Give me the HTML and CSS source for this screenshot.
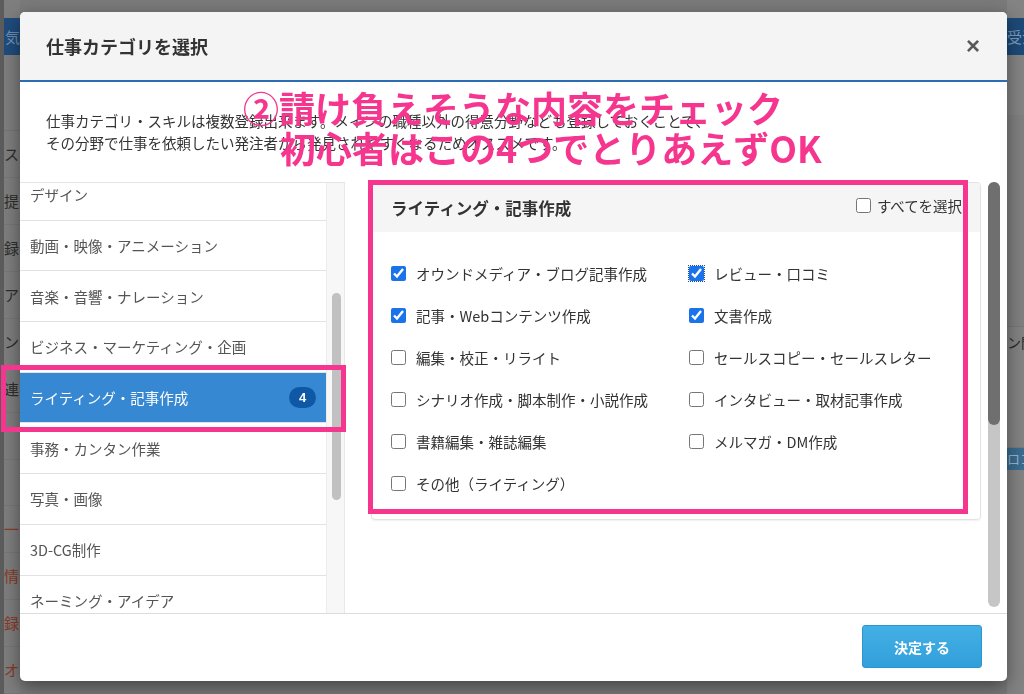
FILE: index.html
```html
<!DOCTYPE html>
<html lang="ja">
<head>
<meta charset="utf-8">
<title>仕事カテゴリを選択</title>
<link rel="stylesheet" href="styles.css">
</head>
<body>
<div class="page">
  <div class="page-left">
    <div class="pl-head">気</div>
    <div class="pl-gap"></div>
    <div class="pl-cell">ス</div>
    <div class="pl-cell">提</div>
    <div class="pl-cell">録</div>
    <div class="pl-cell">ア</div>
    <div class="pl-cell">ン</div>
    <div class="pl-cell">連</div>
    <div class="pl-cell"></div>
    <div class="pl-cell"></div>
    <div class="pl-cell red">一</div>
    <div class="pl-cell red">情</div>
    <div class="pl-cell red">録</div>
    <div class="pl-cell red">オ</div>
  </div>
  <div class="page-center"></div>
  <div class="page-right">
    <div class="pr-head">受注</div>
    <div class="pr-block"></div>
    <div class="pr-text">ン閲</div>
    <div class="pr-spacer"></div>
    <div class="pr-bar">ロコ</div>
  </div>
</div>

<div class="modal">
  <div class="modal-header">
    <h2 class="modal-title">仕事カテゴリを選択</h2>
    <span class="modal-close">×</span>
  </div>
  <div class="modal-desc">
    <p>仕事カテゴリ・スキルは複数登録出来ます。メインの職種以外の得意分野なども登録しておくことで、<br>その分野で仕事を依頼したい発注者から発見されやすくなるためオススメです。</p>
  </div>
  <div class="modal-body">
    <div class="cat-pane">
      <div class="cat-viewport">
        <ul class="cat-list">
          <li class="cat-item">デザイン</li>
          <li class="cat-item">動画・映像・アニメーション</li>
          <li class="cat-item">音楽・音響・ナレーション</li>
          <li class="cat-item">ビジネス・マーケティング・企画</li>
          <li class="cat-item active">ライティング・記事作成<span class="badge">4</span></li>
          <li class="cat-item">事務・カンタン作業</li>
          <li class="cat-item">写真・画像</li>
          <li class="cat-item">3D-CG制作</li>
          <li class="cat-item">ネーミング・アイデア</li>
        </ul>
      </div>
      <div class="scroll-light"><div class="thumb-light"></div></div>
    </div>
    <div class="skill-pane">
      <div class="skill-content">
        <div class="card">
          <div class="card-header">
            <h3 class="card-title">ライティング・記事作成</h3>
            <label class="select-all"><input type="checkbox" class="cb">すべてを選択</label>
          </div>
          <div class="card-body">
            <label class="opt"><input type="checkbox" class="cb" checked>オウンドメディア・ブログ記事作成</label>
            <label class="opt"><input type="checkbox" class="cb focus" checked>レビュー・口コミ</label>
            <label class="opt"><input type="checkbox" class="cb" checked>記事・Webコンテンツ作成</label>
            <label class="opt"><input type="checkbox" class="cb" checked>文書作成</label>
            <label class="opt"><input type="checkbox" class="cb">編集・校正・リライト</label>
            <label class="opt"><input type="checkbox" class="cb">セールスコピー・セールスレター</label>
            <label class="opt"><input type="checkbox" class="cb">シナリオ作成・脚本制作・小説作成</label>
            <label class="opt"><input type="checkbox" class="cb">インタビュー・取材記事作成</label>
            <label class="opt"><input type="checkbox" class="cb">書籍編集・雑誌編集</label>
            <label class="opt"><input type="checkbox" class="cb">メルマガ・DM作成</label>
            <label class="opt"><input type="checkbox" class="cb">その他（ライティング）</label>
          </div>
        </div>
      </div>
      <div class="scroll-dark"><div class="thumb-dark"></div></div>
    </div>
  </div>
  <div class="modal-footer">
    <button class="btn-primary">決定する</button>
  </div>
</div>

<div class="anno-text">
  <span class="anno-line">②請け負えそうな内容をチェック</span>
  <span class="anno-line second">初心者はこの4つでとりあえずOK</span>
</div>
<div class="anno-box anno-card"></div>
<div class="anno-box anno-item"></div>
</body>
</html>
```

FILE: styles.css
```css
* { box-sizing: border-box; }
html, body { margin: 0; padding: 0; }
body {
  width: 1024px;
  height: 694px;
  overflow: hidden;
  background: #7a7a7a;
  font-family: "Noto Sans CJK JP", "Noto Sans", sans-serif;
  color: #333;
}

/* background page (dimmed) */
.page {
  display: flex;
  height: 694px;
}
.page-left {
  width: 20px;
  background: #7e7e7e;
  border-left: 4px solid #5c5c5c;
  display: flex;
  flex-direction: column;
}
.pl-head {
  margin-top: 18px;
  height: 37px;
  background: #1f4c7c;
  color: #6f8fb3;
  font-size: 15px;
  line-height: 37px;
  padding-left: 1px;
}
.pl-gap { height: 77px; border-bottom: 1px solid #747474; }
.pl-cell {
  height: 47px;
  line-height: 46px;
  font-size: 15px;
  color: #2e2e2e;
  padding-left: 0;
  border-bottom: 1px solid #767676;
}
.pl-cell.red { color: #8a3a28; }
.page-center { flex: 1; }
.page-right {
  width: 17px;
  background: #838383;
  display: flex;
  flex-direction: column;
}
.pr-head {
  margin-top: 18px;
  height: 37px;
  background: #1d4a78;
  color: #7f9cc0;
  font-size: 15px;
  line-height: 37px;
  white-space: nowrap;
  overflow: hidden;
}
.pr-block { height: 272px; border-top: 60px solid #848484; border-bottom: 1px solid #777; background: #808080; }
.pr-text {
  height: 30px;
  line-height: 30px;
  font-size: 14px;
  color: #2c2c2c;
  white-space: nowrap;
  overflow: hidden;
}
.pr-spacer { height: 91px; border-bottom: 1px solid #7a7a7a; }
.pr-bar {
  height: 22px;
  background: #3b6c90;
  color: #9ab8cf;
  font-size: 13px;
  line-height: 22px;
  white-space: nowrap;
  overflow: hidden;
}

/* modal */
.modal {
  position: fixed;
  left: 20px;
  top: 12px;
  width: 987px;
  height: 669px;
  background: #fff;
  border-radius: 5px;
  overflow: hidden;
  box-shadow: 0 6px 18px rgba(0,0,0,0.45);
  display: flex;
  flex-direction: column;
}
.modal-header {
  height: 70px;
  flex: none;
  background: #f4f4f4;
  border-bottom: 2px solid #2c6eb4;
  display: flex;
  align-items: center;
  justify-content: space-between;
  padding: 0 27px 0 26px;
}
.modal-title {
  margin: 0;
  font-size: 18px;
  font-weight: bold;
  color: #333;
  line-height: 24px;
}
.modal-close {
  font-size: 24px;
  font-weight: bold;
  color: #5a5a5a;
  line-height: 24px;
  font-family: "Liberation Sans", sans-serif;
}
.modal-desc {
  height: 100px;
  flex: none;
  padding: 28px 26px 0;
}
.modal-desc p {
  margin: 0;
  font-size: 14.5px;
  line-height: 22px;
  color: #333;
  white-space: nowrap;
}
.modal-body {
  height: 431px;
  flex: none;
  display: flex;
}

/* category list */
.cat-pane {
  width: 325px;
  flex: none;
  display: flex;
  border-top: 1px solid #e4e4e4;
  border-right: 1px solid #e8e8e8;
}
.cat-viewport {
  width: 307px;
  overflow: hidden;
  border-right: 1px solid #ececec;
}
.cat-list {
  list-style: none;
  margin: -13px 0 0;
  padding: 0;
}
.cat-item {
  height: 50.7px;
  border-bottom: 1px solid #e2e2e2;
  padding: 0 10px;
  display: flex;
  align-items: center;
  justify-content: space-between;
  font-size: 14.5px;
  color: #555;
}
.cat-item.active {
  background: #3788d3;
  color: #fff;
}
.badge {
  background: #0f58a6;
  color: #fff;
  font-size: 13px;
  font-weight: bold;
  line-height: 21px;
  min-width: 27px;
  text-align: center;
  border-radius: 11px;
  font-family: "Liberation Sans", sans-serif;
}
.scroll-light {
  flex: 1;
  background: #f7f7f7;
  padding: 110px 0 0 5px;
}
.thumb-light {
  width: 9px;
  height: 207px;
  background: #c1c1c1;
  border-radius: 5px;
}

/* skills pane */
.skill-pane {
  flex: 1;
  display: flex;
}
.skill-content {
  flex: 1;
  padding-left: 26px;
}
.card {
  width: 610px;
  height: 338px;
  border: 1px solid #e3e3e3;
  border-radius: 4px;
  box-shadow: 0 1px 2px rgba(0,0,0,0.06);
  overflow: hidden;
}
.card-header {
  height: 49px;
  background: #f5f5f5;
  display: flex;
  align-items: center;
  justify-content: space-between;
  padding: 0 18px 0 19px;
}
.card-title {
  margin: 0;
  font-size: 16.5px;
  font-weight: bold;
  color: #333;
}
.select-all {
  display: flex;
  align-items: center;
  gap: 6px;
  font-size: 14.5px;
  color: #333;
  margin-top: -4px;
}
.card-body {
  display: grid;
  grid-template-columns: 298px 1fr;
  grid-auto-rows: 42px;
  padding: 20px 19px 0;
}
.opt {
  display: flex;
  align-items: center;
  gap: 10px;
  font-size: 14.5px;
  color: #333;
}
.cb {
  width: 15px;
  height: 15px;
  margin: 0;
  accent-color: #1a73e8;
}
.cb.focus { outline: 1px dotted #1a4f9c; outline-offset: 0; }
.scroll-dark {
  width: 12px;
  margin: 0 7px 0 7px;
  height: 425px;
  background: #c6c6c6;
  border-radius: 6px;
}
.thumb-dark {
  height: 243px;
  background: #6f6f6f;
  border-radius: 6px;
}

/* footer */
.modal-footer {
  flex: 1;
  border-top: 1px solid #dcdcdc;
  display: flex;
  justify-content: flex-end;
  padding: 11px 25px 0 0;
}
.btn-primary {
  width: 120px;
  height: 43px;
  border: 1px solid #2b95cd;
  border-radius: 3px;
  background: linear-gradient(#42b0e6, #339fda);
  color: #fff;
  font-family: "Noto Sans CJK JP", sans-serif;
  font-size: 14px;
  font-weight: bold;
}

/* annotations */
.anno-text {
  position: fixed;
  left: 243px;
  top: 87px;
  color: #f6358f;
  font-size: 36px;
  font-weight: bold;
  line-height: 40px;
  white-space: nowrap;
}
.anno-line { display: block; }
.anno-line.second { margin-left: 37px; }
.anno-box {
  position: fixed;
  border: 5px solid #f6358f;
}
.anno-card { left: 368px; top: 180px; width: 600px; height: 334px; }
.anno-item { left: 1px; top: 365px; width: 345px; height: 67px; }
```
